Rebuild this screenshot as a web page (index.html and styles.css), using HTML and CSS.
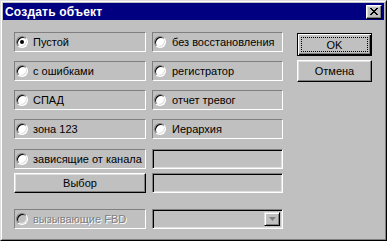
FILE: index.html
```html
<!DOCTYPE html>
<html>
<head>
<meta charset="utf-8">
<link rel="stylesheet" href="styles.css">
</head>
<body>
<div class="window">
  <div class="frame">
    <div class="titlebar">
      <span class="title">Создать объект</span>
      <span class="close"><svg width="8" height="7" viewBox="0 0 8 7"><path d="M0 0h2v1h1v1h2V1h1V0h2v1H7v1H6v1H5v1h1v1h1v1h1v1H6V6H5V5H3v1H2v1H0V6h1V5h1V4h1V3H2V2H1V1H0z" fill="#000"/></svg></span>
    </div>
    <div class="body">
      <div class="options">
        <div class="row r1">
          <div class="cell"><span class="radio checked"></span><span class="lbl">Пустой</span></div>
          <div class="cell c2"><span class="radio"></span><span class="lbl">без восстановления</span></div>
        </div>
        <div class="row r2">
          <div class="cell"><span class="radio"></span><span class="lbl">с ошибками</span></div>
          <div class="cell c2"><span class="radio"></span><span class="lbl">регистратор</span></div>
        </div>
        <div class="row r3">
          <div class="cell"><span class="radio"></span><span class="lbl">СПАД</span></div>
          <div class="cell c2"><span class="radio"></span><span class="lbl">отчет тревог</span></div>
        </div>
        <div class="row r4">
          <div class="cell"><span class="radio"></span><span class="lbl">зона 123</span></div>
          <div class="cell c2"><span class="radio"></span><span class="lbl">Иерархия</span></div>
        </div>
        <div class="row r5">
          <div class="cell"><span class="radio"></span><span class="lbl">зависящие от канала</span></div>
          <div class="edit"></div>
        </div>
        <div class="row r6">
          <div class="btn wide">Выбор</div>
          <div class="edit"></div>
        </div>
        <div class="row r7">
          <div class="cell disabled"><span class="radio"></span><span class="lbl">вызывающие FBD</span></div>
          <div class="edit combo"><span class="drop"><svg width="7" height="4" viewBox="0 0 7 4"><path d="M0 0h7L3.5 4z" fill="#808080"/></svg></span></div>
        </div>
      </div>
      <div class="buttons">
        <div class="btn default"><span class="focus">OK</span></div>
        <div class="btn cancel">Отмена</div>
      </div>
    </div>
  </div>
</div>
</body>
</html>
```
FILE: styles.css
```css
html, body {
  margin: 0;
  padding: 0;
  background: #c0c0c0;
}
body {
  font-family: "Liberation Sans", Arial, sans-serif;
  font-size: 11px;
  color: #000;
}
.window {
  width: 387px;
  height: 241px;
  box-sizing: border-box;
  border: 1px solid;
  border-color: #dfdfdf #000 #000 #dfdfdf;
  background: #c0c0c0;
}
.frame {
  height: 100%;
  box-sizing: border-box;
  border: 1px solid;
  border-color: #fff #808080 #808080 #fff;
  padding: 1px;
}
.titlebar {
  height: 17px;
  background: #000080;
  display: flex;
  align-items: center;
  justify-content: space-between;
  padding: 0 2px 0 2px;
}
.title {
  color: #fff;
  font-weight: bold;
  font-size: 12px;
  letter-spacing: 0.2px;
}
.close {
  width: 16px;
  height: 14px;
  box-sizing: border-box;
  background: #c0c0c0;
  border: 1px solid;
  border-color: #fff #000 #000 #fff;
  box-shadow: inset -1px -1px #808080, inset 1px 1px #dfdfdf;
  display: flex;
  align-items: center;
  justify-content: center;
}
.close svg { display: block; }
.body {
  display: flex;
  padding: 12px 0 0 11px;
}
.options {
  display: flex;
  flex-direction: column;
}
.row {
  display: flex;
  gap: 6px;
  height: 20px;
}
.r2, .r3, .r4 { margin-top: 9px; }
.r5 { margin-top: 10px; }
.r6 { margin-top: 4px; }
.r7 { margin-top: 16px; }
.cell {
  width: 132px;
  box-sizing: border-box;
  border: 1px solid;
  border-color: #808080 #fff #fff #808080;
  display: flex;
  align-items: center;
  padding-left: 1px;
  white-space: nowrap;
}
.cell.c2 { width: 131px; padding-left: 1px; }
.radio {
  width: 12px;
  height: 12px;
  box-sizing: border-box;
  border-radius: 50%;
  background: #fff;
  border: 1px solid;
  border-color: #808080 #fff #fff #808080;
  box-shadow: inset 1px 1px #000, inset -1px -1px #dfdfdf;
  position: relative;
  flex: none;
}
.radio.checked::after {
  content: "";
  position: absolute;
  left: 3px;
  top: 3px;
  width: 4px;
  height: 4px;
  border-radius: 50%;
  background: #000;
}
.lbl {
  margin-left: 5px;
}
.c2 .lbl { margin-left: 6px; }
.disabled .lbl {
  color: #808080;
  text-shadow: 1px 1px #fff;
}
.disabled .radio {
  background: #c0c0c0;
}
.edit {
  width: 131px;
  box-sizing: border-box;
  border: 1px solid;
  border-color: #808080 #fff #fff #808080;
  box-shadow: inset 1px 1px #000, inset -1px -1px #dfdfdf;
  background: #c0c0c0;
}
.combo {
  display: flex;
  justify-content: flex-end;
  align-items: stretch;
  padding: 2px;
}
.drop {
  width: 16px;
  box-sizing: border-box;
  border: 1px solid;
  border-color: #dfdfdf #000 #000 #dfdfdf;
  box-shadow: inset 1px 1px #fff, inset -1px -1px #808080;
  display: flex;
  align-items: center;
  justify-content: center;
}
.btn {
  box-sizing: border-box;
  border: 1px solid;
  border-color: #fff #000 #000 #fff;
  box-shadow: inset -1px -1px #808080, inset 1px 1px #dfdfdf;
  display: flex;
  align-items: center;
  justify-content: center;
  background: #c0c0c0;
}
.btn.wide {
  width: 132px;
  height: 20px;
}
.buttons {
  display: flex;
  flex-direction: column;
  margin-left: 14px;
  padding-top: 1px;
}
.btn.default {
  width: 75px;
  height: 23px;
  border: 1px solid #000;
  box-shadow: inset 1px 1px #fff, inset -1px -1px #000, inset -2px -2px #808080;
  padding: 3px;
}
.focus {
  flex: 1;
  align-self: stretch;
  border: 1px dotted #000;
  display: flex;
  align-items: center;
  justify-content: center;
}
.btn.cancel {
  width: 75px;
  height: 22px;
  margin-top: 4px;
}
```
